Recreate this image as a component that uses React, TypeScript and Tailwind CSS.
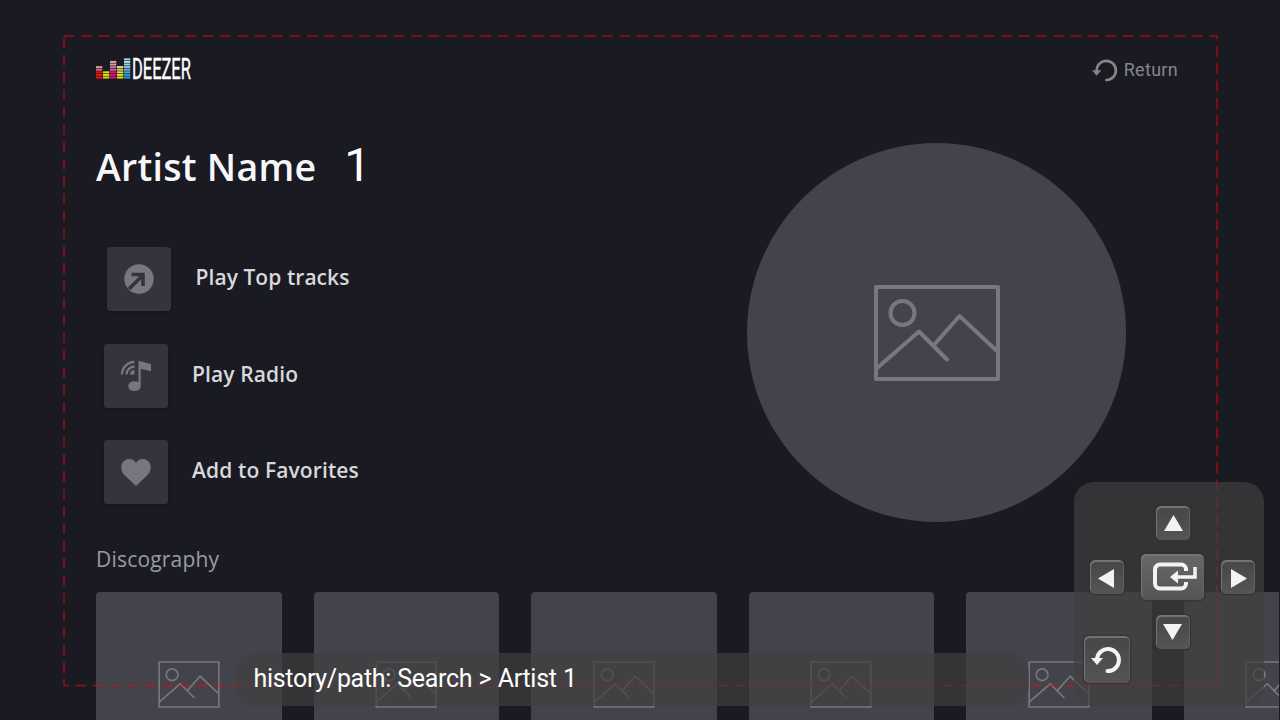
import type { ReactNode } from 'react';

function Placeholder({ className, stroke }: { className: string; stroke: number }) {
  return (
    <svg viewBox="0 0 126 96" className={className} fill="none" stroke="currentColor" strokeWidth={stroke} strokeLinejoin="round" strokeLinecap="round">
      <rect x="2" y="2" width="122" height="92" />
      <circle cx="28.5" cy="28" r="12" />
      <path d="M2 84 45 46.500 73 74.500M60 60 85.500 31 124 67" />
    </svg>
  );
}

function Logo() {
  const bars = [
    { x: 0, colors: ['#e3141c', '#e3141c', '#e3141c', '#d8666a', '#d99a8c'] },
    { x: 7, colors: ['#d9dd12', '#e6e600', '#d9dd12'] },
    { x: 14, colors: ['#e0107c', '#e0107c', '#e0107c', '#d6609a', '#b37a92', '#d79cab', '#e4a0b0'] },
    { x: 21, colors: ['#e6e600', '#dede20', '#dede20', '#c9c970', '#e2e2a0'] },
    { x: 28, colors: ['#2b9fd6', '#2b9fd6', '#4aa8d4', '#6fb4d2', '#8fc2d6', '#a8cfdd', '#b8dbe6', '#a7cfdf'] },
  ];
  return (
    <svg width="110" height="40" viewBox="0 0 110 40" className="-mt-1 block overflow-visible">
      {bars.map((b) => b.colors.map((c, i) => (
        <rect key={`${b.x}-${i}`} x={b.x} y={23.5 - i * 2.6} width="6.300" height="2" fill={c} />
      )))}
      <text transform="translate(36 25.700) scale(.55 1)" textLength="107" lengthAdjust="spacingAndGlyphs" fontFamily="Roboto, sans-serif" fontSize="29.500" fontWeight="400" fill="#fff" stroke="#fff" strokeWidth="0.400">DEEZER</text>
    </svg>
  );
}

function ReturnGlyph({ className }: { className: string }) {
  return (
    <svg viewBox="0 0 26 24" className={className}>
      <path d="M4.700 12A9.600 9.600 0 1 1 14.300 22" fill="none" stroke="currentColor" strokeWidth="2.700" strokeLinecap="round" />
      <path d="M0 12.300H9.400L4.700 17.800Z" fill="currentColor" />
    </svg>
  );
}

function Tile({ children }: { children: ReactNode }) {
  return (
    <div className="flex size-16 shrink-0 items-center justify-center rounded-[4px] bg-[#34343d] text-[#777780] shadow-[0_2px_5px_rgba(0,0,0,0.2)]">
      {children}
    </div>
  );
}

function Key({ children, className = 'h-[36px] w-[36px]' }: { children: ReactNode; className?: string }) {
  return (
    <div className={`flex shrink-0 items-center justify-center rounded-md border border-[#353535] bg-linear-to-b from-[#464646] to-[#555555] text-[#f3f3f3] shadow-[inset_1px_2px_1px_#757575,inset_-1px_0_1px_#626262,0_0_1px_#222] ${className}`}>
      {children}
    </div>
  );
}

function Remote() {
  return (
    <div className="absolute top-[482px] left-[1074px] flex h-[224px] w-[190px] flex-col rounded-[20px] bg-[#404040]/70 pt-[23px]">
      <div className="pl-[80.500px]">
        <Key>
          <svg width="19" height="16" viewBox="0 0 19 16" className="ml-px"><path d="M9.500 0 19 16H0Z" fill="currentColor" /></svg>
        </Key>
      </div>
      <div className="mt-[12px] flex items-center pl-[15px]">
        <Key className="h-[36px] w-[36px]">
          <svg width="16" height="19" viewBox="0 0 16 19" className="mt-0.5 -ml-0.5"><path d="M0 9.500 16 0V19Z" fill="currentColor" /></svg>
        </Key>
        <Key className="ml-[15px] h-[48px] w-[65px] rounded-[9px] bg-linear-to-b from-[#686868] to-[#505050]">
          <svg width="46" height="30" viewBox="0 0 46 30" fill="none" stroke="currentColor" className="ml-[5px] -mt-px">
            <path d="M34 9V7.500a5 5 0 0 0-5-5H8a5 5 0 0 0-5 5v14a5 5 0 0 0 5 5h21a5 5 0 0 0 5-5V20" strokeWidth="4" />
            <path d="M43 5V15H25" strokeWidth="3.500" />
            <path d="M18 15 26 8.500V21.500Z" fill="currentColor" stroke="none" />
          </svg>
        </Key>
        <Key className="ml-[15px] h-[36px] w-[36px]">
          <svg width="16" height="19" viewBox="0 0 16 19" className="mt-0.5 ml-0.5"><path d="M16 9.500 0 0V19Z" fill="currentColor" /></svg>
        </Key>
      </div>
      <div className="mt-[13px] pl-[80.500px]">
        <Key>
          <svg width="19" height="16" viewBox="0 0 19 16" className="-ml-px"><path d="M9.500 16 19 0H0Z" fill="currentColor" /></svg>
        </Key>
      </div>
      <div className="-mt-[15px] pl-[9px]">
        <Key className="h-[49px] w-[48px] rounded-[8px]">
          <svg width="32" height="30" viewBox="0 0 32 30" className="-ml-0.5">
            <path d="M7 14A11 11 0 1 1 17.500 26" fill="none" stroke="currentColor" strokeWidth="4" strokeLinecap="round" />
            <path d="M1 13H13L7 20Z" fill="currentColor" />
          </svg>
        </Key>
      </div>
    </div>
  );
}

export default function App() {
  return (
    <div className="relative h-[720px] w-[1280px] overflow-hidden bg-[#1a1a23] font-['Open_Sans',sans-serif]">
      <div className="flex h-full flex-col pl-24">
        <header className="flex h-[107px] shrink-0 justify-between pt-[57px] pr-[102px]">
          <Logo />
          <div className="flex items-start text-[#85858b]">
            <ReturnGlyph className="mt-px h-6 w-[26px] text-[#858585]" />
            <span className="ml-[6px] font-['Roboto',sans-serif] text-[18px] leading-[25px] tracking-[0.3px]">Return</span>
          </div>
        </header>

        <div className="flex h-[431px] shrink-0">
          <section className="w-[651px]">
            <h1 className="flex h-[140px] pt-[29px] text-white">
              <span className="text-[37.5px] leading-[62px] font-semibold tracking-[0.25px] text-[#f7f7f9]">Artist Name</span>
              <span className="ml-[28px] font-['Roboto',sans-serif] text-[47px] leading-[58px]">1</span>
            </h1>
            <ul className="flex flex-col gap-[32.500px] pl-2 text-[21px] leading-[28px] font-semibold tracking-[0.12px] text-[#d8d8db]">
              <li className="flex gap-[24.500px] pl-[3px]">
                <Tile>
                  <svg width="30" height="30" viewBox="0 0 30 30">
                    <circle cx="15" cy="15" r="14.700" fill="currentColor" />
                    <path d="M5 25 18.500 11.500M7.500 10.500H19V22" fill="none" stroke="#34343d" strokeWidth="3.600" />
                  </svg>
                </Tile>
                <span className="pt-4 tracking-[0.06px]">Play Top tracks</span>
              </li>
              <li className="flex gap-6">
                <Tile>
                  <svg width="32" height="32" viewBox="0 0 32 32" fill="currentColor">
                    <path d="M18.500 .8 31 4V11.200L20.700 8.800V26C20.700 29 18 31 14.300 31S8.300 29 8.300 26.300s2.600-5 6-5c1.600 0 3 .3 4.200.8Z" />
                    <path d="M2 14.500C2 7.500 7.500 2 14.500 2M6.500 14.500a8 8 0 0 1 8-8" fill="none" stroke="currentColor" strokeWidth="2.300" />
                    <path d="M10 14.500a4.500 4.500 0 0 1 4.500-4.500v4.500Z" />
                  </svg>
                </Tile>
                <span className="pt-4">Play Radio</span>
              </li>
              <li className="flex gap-6">
                <Tile>
                  <svg width="30" height="27" viewBox="0 0 30 27">
                    <path d="M15 27 3.500 16C-3 9.500 1 0 8.400 0 11.500 0 14 2 15 4 16 2 18.500 0 21.600 0 29 0 33 9.500 26.500 16Z" fill="currentColor" />
                  </svg>
                </Tile>
                <span className="pt-4">Add to Favorites</span>
              </li>
            </ul>
          </section>
          <div className="mt-9 flex size-[379px] items-center justify-center rounded-full bg-[#43434b] text-[#777780]">
            <Placeholder className="h-[96px] w-[126px]" stroke={4} />
          </div>
        </div>

        <section>
          <h2 className="h-[54px] pt-[7px] text-[21px] leading-[28px] tracking-[0.2px] text-[#9b9ba0]">Discography</h2>
          <div className="flex w-[1183px] gap-8 overflow-hidden">
            {[0, 1, 2, 3, 4, 5].map((n) => (
              <div key={n} className="flex h-[185px] w-[185.5px] shrink-0 justify-center rounded-[4px] bg-[#43434b] pt-[69px] text-[#777780]">
                <Placeholder className="h-[47px] w-[62px]" stroke={3.4} />
              </div>
            ))}
          </div>
        </section>
      </div>

      <svg className="pointer-events-none absolute inset-0" width="1280" height="720" fill="none">
        <path d="M64 36H1217V685.500H64Z" stroke="#ff0008" strokeOpacity="0.580" strokeWidth="1.500" strokeDasharray="10.700 6.657" />
      </svg>

      <div className="absolute top-[653px] left-[236px] flex h-[53px] w-[793px] items-center rounded-[20px] bg-[#404040]/70 pl-[17.500px] font-['Roboto',sans-serif] text-[25px] text-white">
        <span className="-mt-0.5 tracking-[-0.3px] [word-spacing:0.4px]">history/path: Search &gt; Artist 1</span>
      </div>
      <Remote />
    </div>
  );
}
